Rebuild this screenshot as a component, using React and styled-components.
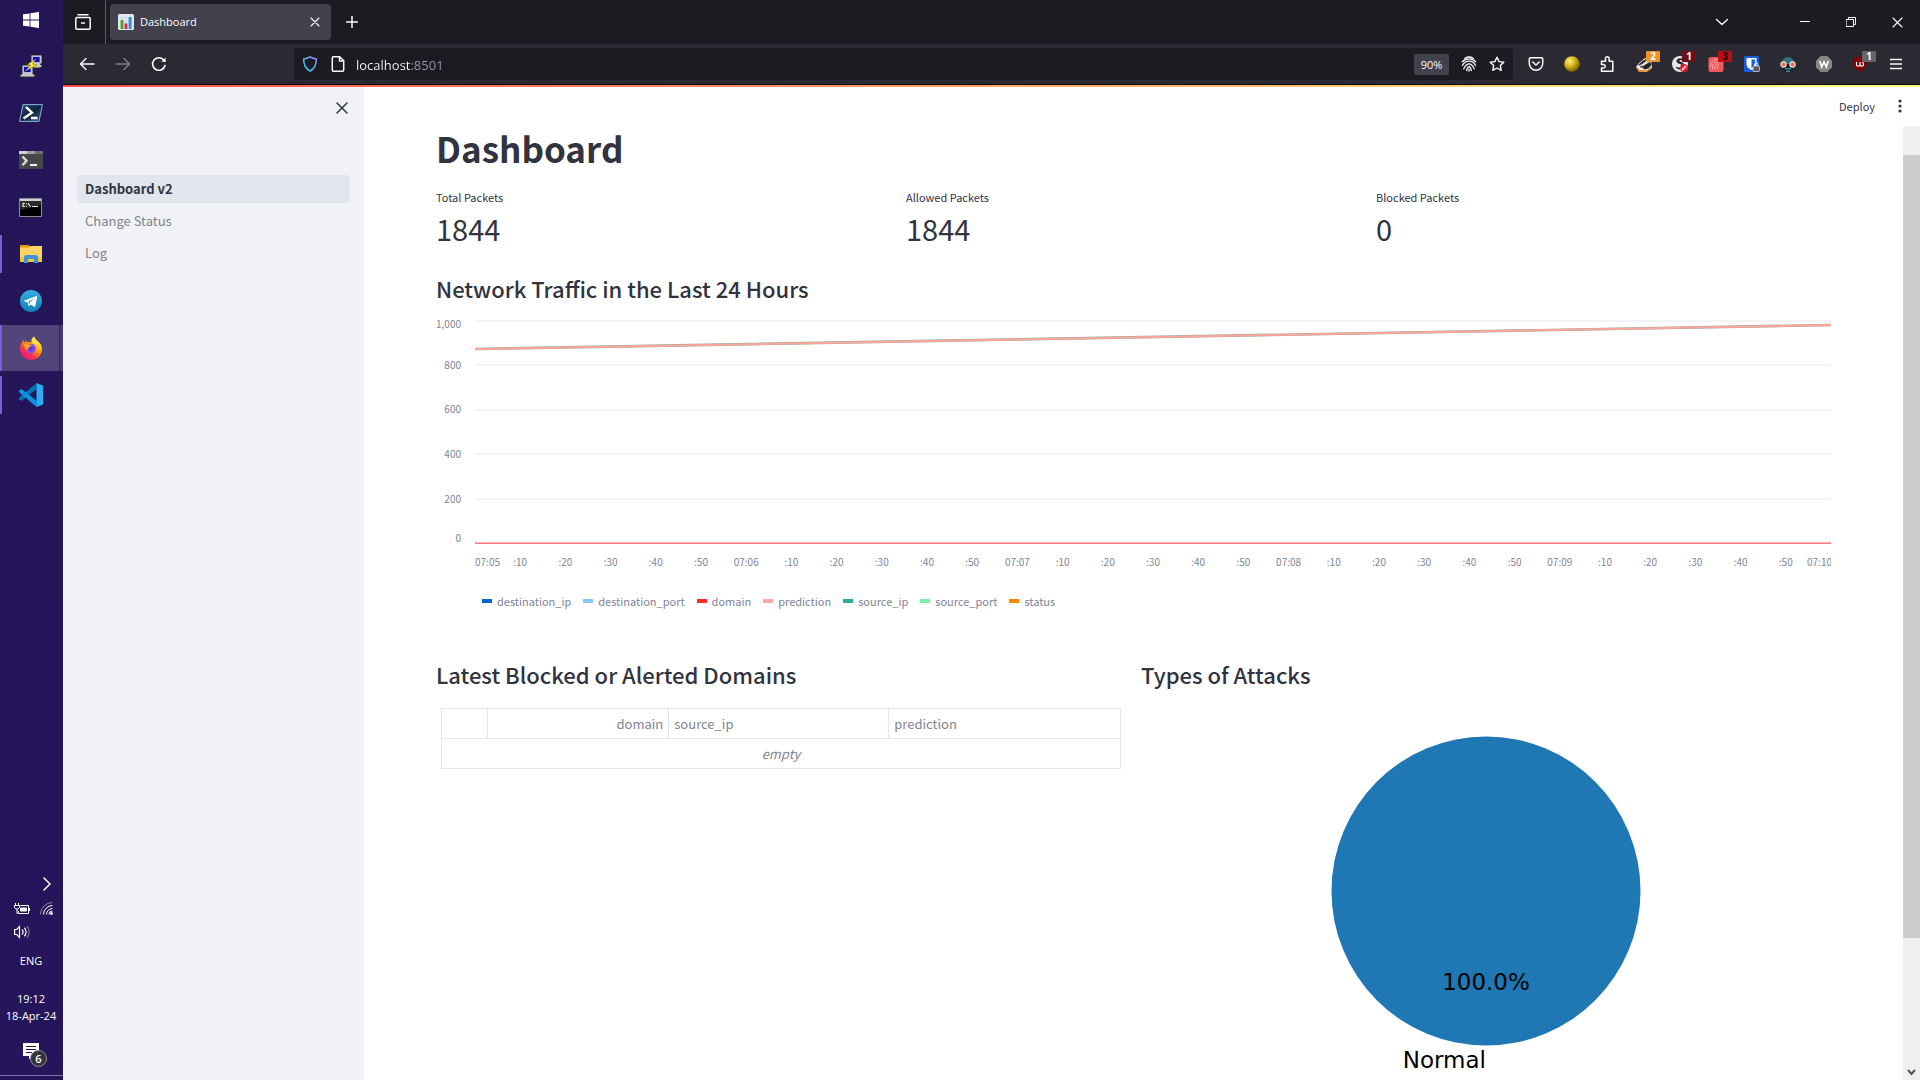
import React from 'react';
import styled, { createGlobalStyle, css } from 'styled-components';

const SANS = '"Noto Sans CJK SC", "Noto Sans", sans-serif';
const SYSTEM = '"Open Sans", "Noto Sans", sans-serif';

const GlobalStyle = createGlobalStyle`
  *, *::before, *::after { box-sizing: border-box; }
  body { margin: 0; background: #fff; font-family: ${SANS}; overflow: hidden; }
  button { border: 0; padding: 0; margin: 0; background: none; color: inherit; font: inherit; cursor: pointer; }
  svg { display: block; flex: none; }
`;

/* ---------- shell ---------- */

const Desktop = styled.div`
  display: flex;
  height: 100vh;
  overflow: hidden;
`;

const Taskbar = styled.nav`
  display: flex;
  flex-direction: column;
  width: 63px;
  flex: none;
  background: linear-gradient(#241557, #25165c);
  color: #fff;
  font-family: ${SYSTEM};
`;

const StartButton = styled.button`
  display: grid;
  place-items: center;
  height: 40px;
  margin-bottom: 3px;
  padding-right: 2px;
`;

const AppButton = styled.button`
  position: relative;
  display: grid;
  place-items: center;
  height: 46px;
  margin-bottom: 1px;
  padding-right: 2px;
  ${p => p.$active && css`
    background: linear-gradient(to right, #51457a 59px, #33275f 59px, #33275f 60px, #463a70 60px);
  `}
  ${p => p.$open && css`
    &::before {
      content: '';
      position: absolute;
      left: 0;
      top: ${p.$active ? 0 : 4}px;
      bottom: ${p.$active ? 0 : 4}px;
      width: 2px;
      background: #7561d1;
    }
  `}
`;

const Tray = styled.div`
  display: flex;
  flex-direction: column;
  margin-top: auto;
`;

const TrayToggle = styled.button`
  display: flex;
  justify-content: flex-end;
  padding: 0 10px 0 0;
  height: 25px;
`;

const TrayIcons = styled.div`
  display: grid;
  grid-template-columns: 16px 14px;
  gap: 10px;
  padding: 0 0 0 14px;
  align-items: center;
`;

const TrayText = styled.div`
  font-size: 11px;
  line-height: 17px;
  text-align: center;
  white-space: nowrap;
  padding-right: 1px;
  margin-top: ${p => p.$gap || 0}px;
`;

const Notifications = styled.button`
  position: relative;
  display: flex;
  margin-top: 19px;
  padding-left: 23px;
  height: 32px;
`;

const Count = styled.span`
  position: absolute;
  left: 30px;
  top: 7px;
  width: 17px;
  height: 17px;
  border: 1px solid #8f8f98;
  border-radius: 50%;
  background: #33323d;
  font-size: 11px;
  font-weight: 600;
  line-height: 15px;
  text-align: center;
`;

const ShowDesktop = styled.button`
  height: 5px;
  border-top: 1px solid #8279a6;
`;

/* ---------- browser ---------- */

const Browser = styled.div`
  flex: 1;
  min-width: 0;
  display: flex;
  flex-direction: column;
`;

const TabStrip = styled.div`
  display: flex;
  align-items: center;
  height: 44px;
  flex: none;
  background: #1c1b22;
  color: #fbfbfe;
  font-family: ${SYSTEM};
`;

const ViewButton = styled.button`
  display: grid;
  place-items: center;
  width: 43px;
  height: 44px;
  padding-right: 3px;
  border-right: 1px solid #5b5b66;
`;

const Tab = styled.div`
  display: flex;
  align-items: center;
  gap: 6px;
  width: 221px;
  height: 36px;
  margin-left: 4px;
  padding: 0 8px;
  border-radius: 4px;
  background: #42414d;
  line-height: 16px;
`;

const TabTitle = styled.span`
  flex: 1;
  font-size: 11px;
`;

const IconButton = styled.button`
  position: relative;
  display: grid;
  place-items: center;
  width: ${p => p.$w || 36}px;
  height: ${p => p.$h || 32}px;
  opacity: ${p => (p.disabled ? 0.4 : 1)};
`;

const TabListButton = styled(IconButton)`
  margin: 0 42px 0 auto;
`;

const WindowControls = styled.div`
  display: flex;
`;

const NavBar = styled.div`
  display: flex;
  align-items: center;
  height: 41px;
  flex: none;
  padding: 0 6px;
  background: #2b2a33;
  border-bottom: 1px solid #0c0c0d;
  color: #fbfbfe;
  font-family: ${SYSTEM};
`;

const UrlBar = styled.label`
  display: flex;
  align-items: center;
  flex: 1;
  height: 32px;
  margin: 0 5px 0 117px;
  padding: 0 2px;
  border-radius: 4px;
  background: #1c1b22;
`;

const UrlInput = styled.input.attrs({ type: 'text' })`
  flex: 1;
  min-width: 0;
  border: 0;
  padding: 1px 0 0 4px;
  outline: 0;
  font: 13px/20px ${SYSTEM};
  background: linear-gradient(to right, #fbfbfe 59px, #9a99a2 59px);
  background-clip: text;
  -webkit-background-clip: text;
  color: transparent;
`;

const ZoomLevel = styled.button`
  width: 35px;
  height: 21px;
  margin-right: 6px;
  border-radius: 2px;
  background: #42414d;
  font-size: 11px;
  line-height: 21px;
`;

const Badge = styled.span`
  position: absolute;
  right: 2px;
  top: 3px;
  width: 14px;
  height: 11px;
  border-radius: 1px;
  background: ${p => p.$bg};
  color: ${p => p.$color || '#fff'};
  font-size: 10px;
  font-weight: 700;
  line-height: 11px;
  text-align: center;
`;

/* ---------- web page ---------- */

const Decoration = styled.div`
  height: 2px;
  flex: none;
  background: linear-gradient(to right, #ff4b4b, #fffd80);
`;

const Page = styled.div`
  display: flex;
  flex: 1;
  min-height: 0;
  color: #31333f;
`;

const Sidebar = styled.aside`
  width: 301px;
  flex: none;
  padding: 10px 14px;
  background: #f0f2f6;
`;

const SidebarTop = styled.div`
  display: flex;
  justify-content: flex-end;
  height: 78px;
  align-items: flex-start;
`;

const SideNav = styled.nav`
  display: flex;
  flex-direction: column;
  gap: 4px;
`;

const SideLink = styled.a`
  display: block;
  height: 28px;
  padding: 0 8px;
  border-radius: 4px;
  font-size: 13px;
  line-height: 28px;
  text-decoration: none;
  color: ${p => (p.$active ? '#31333f' : '#81838c')};
  font-weight: ${p => (p.$active ? 700 : 400)};
  background: ${p => (p.$active ? '#e1e6ed' : 'transparent')};
`;

const View = styled.div`
  flex: 1;
  min-width: 0;
  display: flex;
  flex-direction: column;
`;

const Toolbar = styled.header`
  display: flex;
  justify-content: flex-end;
  align-items: center;
  gap: 7px;
  height: 39px;
  flex: none;
  padding: 0 10px 1px 0;
`;

const DeployButton = styled.button`
  font-size: 11px;
  line-height: 20px;
  padding: 0 8px;
`;

const Scroller = styled.div`
  display: flex;
  flex: 1;
  min-height: 0;
`;

const Content = styled.main`
  flex: 1;
  min-width: 0;
  padding: 0 72px;
`;

const ScrollTrack = styled.div`
  display: flex;
  flex-direction: column;
  justify-content: space-between;
  align-items: center;
  width: 17px;
  flex: none;
  padding: 29px 0 4px;
  background: #f0f0f0;
`;

const ScrollThumb = styled.div`
  width: 17px;
  height: 85%;
  background: #cdcdcd;
`;

const Title = styled.h1`
  margin: 0 0 17px;
  font-size: 35px;
  line-height: 44px;
  font-weight: 700;
`;

const Heading = styled.h3`
  margin: 0 0 2px;
  font-size: 22px;
  line-height: 32px;
  font-weight: 500;
`;

const Columns = styled.div`
  display: grid;
  grid-template-columns: repeat(${p => p.$count}, minmax(0, 1fr));
  gap: 15px;
  margin-bottom: ${p => p.$below || 0}px;
`;

const MetricLabel = styled.div`
  font-size: 11px;
  line-height: 20px;
`;

const MetricValue = styled.div`
  font-size: 29px;
  line-height: 42px;
`;

const Chart = styled.figure`
  display: flex;
  margin: 0;
  svg text {
    font-family: ${SANS};
    font-size: 10px;
    fill: #808495;
  }
`;

const YAxis = styled.svg`
  width: 39px;
  height: 275px;
`;

const Plot = styled.svg`
  flex: 1 1 0;
  min-width: 0;
  height: 275px;
  overflow: hidden;
`;

const Legend = styled.ul`
  display: flex;
  gap: 12px;
  list-style: none;
  margin: 10px 0 47px;
  padding: 0 0 0 46px;
`;

const LegendItem = styled.li`
  display: flex;
  align-items: center;
  gap: 5px;
  font-size: 11px;
  line-height: 20px;
  color: #808495;
  &::before {
    content: '';
    width: 10px;
    height: 4px;
    background: ${p => p.$color};
  }
`;

const TableWrap = styled.div`
  padding: 16px 5px 0;
`;

const Table = styled.table`
  width: 100%;
  table-layout: fixed;
  border-collapse: collapse;
  font-size: 13px;
  line-height: 20px;
  th, td {
    height: 30px;
    padding: 0 5px;
    border: 1px solid #e6e6ea;
    font-weight: 400;
    text-align: left;
    color: #83848c;
  }
`;

const Th = styled.th.attrs({ scope: 'col' })`
  && { text-align: ${p => p.$align || 'left'}; }
  width: ${p => p.$w};
`;

const Empty = styled.td`
  && { text-align: center; font-style: italic; }
`;

const Pie = styled.svg`
  width: 100%;
  height: 388px;
  text { font-family: "DejaVu Sans", sans-serif; font-size: 23px; fill: #000; }
`;

/* ---------- icons ---------- */

const Line = ({ size = 16, w = 1.4, children, ...rest }) => (
  <svg width={size} height={size} viewBox={`0 0 ${size} ${size}`} fill="none" stroke="currentColor"
    strokeWidth={w} strokeLinecap="round" strokeLinejoin="round" {...rest}>{children}</svg>
);

const WindowsIcon = () => (
  <svg width="16" height="16" viewBox="0 0 16 16" fill="#fff">
    <path d="M0 2.3 6.6 1.4V7.6H0zM7.4 1.3 16 0V7.6H7.4zM0 8.4H6.6V14.6L0 13.7zM7.4 8.4H16V16L7.4 14.7z" />
  </svg>
);

const PuttyIcon = () => (
  <svg width="24" height="24" viewBox="0 0 24 24">
    <path d="M12 1h11v9h-2l2 1v2l-3 1H12l-2-1 2-3z" fill="#c6c6c6" stroke="#222" strokeWidth=".8" />
    <path d="M13.500 2.500h7.500v6h-7.500z" fill="#0b0bd8" stroke="#eee" strokeWidth=".6" />
    <path d="M3 11h11v9l2 1v2H1v-2l2-1z" fill="#c6c6c6" stroke="#222" strokeWidth=".8" />
    <path d="M4.500 12.500h7.500v6H4.500z" fill="#0b0bd8" stroke="#eee" strokeWidth=".6" />
    <path d="M17.500 4.500 8 10.500l3.800.8L5 18l12.500-7-4-.9z" fill="#ffee1c" stroke="#4a4a00" strokeWidth=".4" />
  </svg>
);

const PowerShellIcon = () => (
  <svg width="24" height="18" viewBox="0 0 24 18">
    <defs>
      <linearGradient id="ps" x1="0" y1="0" x2="1" y2="1">
        <stop offset="0" stopColor="#2c5179" /><stop offset=".5" stopColor="#10223b" /><stop offset="1" stopColor="#3a618e" />
      </linearGradient>
    </defs>
    <path d="M4 .6h19.400L20 17.400H.6z" fill="url(#ps)" stroke="#8fb4dc" />
    <path d="m7 3 6 5.700L4.500 14.500M12 14h6.500" fill="none" stroke="#fff" strokeWidth="2.400" />
  </svg>
);

const TerminalIcon = () => (
  <svg width="24" height="18" viewBox="0 0 24 18">
    <path d="M0 0h24v18H0z" fill="#464646" />
    <path d="M0 0h8v3H0z" fill="#d0d0d0" /><path d="M8 0h8v3H8z" fill="#a0a0a0" /><path d="M16 0h8v3h-8z" fill="#6d6d6d" />
    <path d="m3.500 5.500 4 4.300-4 4.400" fill="none" stroke="#d9d9d9" strokeWidth="2.400" />
    <path d="M11 13h7v2h-7z" fill="#f0f0f0" />
  </svg>
);

const CmdIcon = () => (
  <svg width="24" height="19" viewBox="0 0 24 19">
    <path d="M.5.5h22v18H.5z" fill="#000" stroke="#8d8d8d" />
    <path d="M1 1h21v2H1z" fill="#c9d2da" />
    <path d="M1 3h21v4L1 12z" fill="#2a2a2a" />
    <path d="M5.800 5.400H4v3h1.800M7.500 5.500v1M7.500 8v.8M9 5l2.500 4M13 8.500h6" stroke="#e8e8e8" fill="none" strokeWidth="1.100" />
  </svg>
);

const ExplorerIcon = () => (
  <svg width="22" height="18" viewBox="0 0 22 18">
    <path d="M0 0h9l1 1.500V5H0z" fill="#e19d0b" />
    <path d="M0 2.600h9L10.500 1H22v16H0z" fill="#ffd464" />
    <path d="M0 12h22v5H0z" fill="#f8c63e" />
    <path d="M4 18v-6.500l1.500-1.500h11l1.500 1.500V18h-4v-4H8v4z" fill="#3a96dd" />
  </svg>
);

const TelegramIcon = () => (
  <svg width="22" height="22" viewBox="0 0 24 24">
    <defs><linearGradient id="tg" x1="0" y1="0" x2="0" y2="1"><stop stopColor="#37aee2" /><stop offset="1" stopColor="#1180b8" /></linearGradient></defs>
    <circle cx="12" cy="12" r="12" fill="url(#tg)" />
    <path d="M4.500 11.800 17.800 6.600c.6-.2 1.200.2 1 1.100l-2.200 10c-.2.800-.7.900-1.300.6l-3.500-2.600-1.700 1.700c-.4.300-.7.200-.8-.3l-1.100-3.700-3.700-1.100c-.6-.2-.6-.4 0-.5z" fill="#fff" />
    <path d="m9.200 12.800 6.600-4.100-5.200 5-.3 2.600z" fill="#1c8ec6" />
  </svg>
);

const FirefoxIcon = () => (
  <svg width="24" height="24" viewBox="0 0 24 24">
    <defs>
      <linearGradient id="ffa" x1=".85" y1=".1" x2=".2" y2=".95">
        <stop offset="0" stopColor="#fff44f" /><stop offset=".4" stopColor="#ff980e" /><stop offset=".7" stopColor="#ff3647" /><stop offset="1" stopColor="#e31587" />
      </linearGradient>
      <radialGradient id="ffb"><stop offset="0" stopColor="#592acb" /><stop offset="1" stopColor="#9059ff" /></radialGradient>
    </defs>
    <path d="M15 .5c1.200 1.700 1.400 2.800 3.600 4.500 3 2.300 4.400 4.800 4.400 8A11 11 0 0 1 1 13C1 9.500 2 7.500 3.300 5.600L4 4l1.500 2.200 2-1.700.5 1.800c1.700-.6 3.200-.3 4.400.4C11.500 4 13 2 15 .5z" fill="url(#ffa)" />
    <circle cx="12" cy="12.500" r="4.800" fill="url(#ffb)" />
    <path d="M4 8.500c2-1.500 4.500-1.200 5.500 0 1.200.5 2.600.2 3.500.6-.7 1.800-2.500 1.400-3.200 2.400-.7 1-.5 2.400-2.500 2.600-1.400-1.300-1-3-3.300-5.600z" fill="#ffa21a" />
    <path d="M15 1c.5 3.500 5 5.500 5.700 11-1-2.500-3-4.200-7.200-5C12.800 5 13.500 2.500 15 1z" fill="#fff04a" opacity=".8" />
  </svg>
);

const VSCodeIcon = () => (
  <svg width="24" height="24" viewBox="0 0 24 24">
    <path d="M17.500 0v6.200L2.500 18 0 16.500v-1.700z" fill="#0572b3" />
    <path d="M0 9V7.500L2.500 6l15 11.800V24z" fill="#0795e0" />
    <path d="M17.500 0 24 2.600v18.800L17.500 24z" fill="#29adf3" />
  </svg>
);

const Cross = ({ size = 10 }) => <Line size={size} w={1.1}><path d={`M1 1 ${size - 1} ${size - 1}M${size - 1} 1 1 ${size - 1}`} /></Line>;

const BatteryIcon = () => (
  <svg width="16" height="12" viewBox="0 0 16 12" fill="none" stroke="#fff">
    <path d="M6.500 2.500h8v8h-10V8M15.500 5v3M1.500 0v2M4.500 0v2M.5 2.500h5v2L4 6H2L.5 4.500zM3 6v5" />
    <path d="M6.500 5H12.500v3H6.500z" fill="#fff" />
  </svg>
);

const WifiIcon = () => (
  <svg width="13" height="13" viewBox="0 0 13 13" fill="none" stroke="#fff">
    <path d="M.5 12.500a12 12 0 0 1 12-12" opacity=".45" /><path d="M3.500 12.500a9 9 0 0 1 9-9M6.500 12.500a6 6 0 0 1 6-6M9 12.500a3.500 3.500 0 0 1 3.500-3.500" />
    <circle cx="11.500" cy="11.500" r="1" fill="#fff" />
  </svg>
);

const VolumeIcon = () => (
  <svg width="16" height="14" viewBox="0 0 16 14" fill="none" stroke="#fff" strokeWidth="1.200">
    <path d="M.6 4.500h2.200L5.500 1.600v10.800L2.800 9.500H.6z" /><path d="M8 4.500a3.500 3.500 0 0 1 0 5M10.300 2.700a6 6 0 0 1 0 8.600" /><path d="M12.800 1a9 9 0 0 1 0 12" opacity=".4" />
  </svg>
);

const NoteIcon = () => (
  <svg width="16" height="17" viewBox="0 0 16 17"><path d="M0 0h16v13H9.500L6 16.500V13H0z" fill="#fff" /><path d="M3 3.500h10M3 6.500h10M3 9.500h6" stroke="#25165c" /></svg>
);

const ViewIcon = () => (
  <Line w={1.500}><path d="M3 .8h10M1.800 3.600h12.400a1 1 0 0 1 1 1v9.600a1 1 0 0 1-1 1H1.800a1 1 0 0 1-1-1V4.600a1 1 0 0 1 1-1zM6.500 9h3" /></Line>
);

const ChartIcon = () => (
  <svg width="16" height="16" viewBox="0 0 16 16">
    <rect width="16" height="16" rx="1.500" fill="#e3ecf2" />
    <path d="M0 4h16M0 8h16M0 12h16M4 0v16M8 0v16M12 0v16" stroke="#bccad4" strokeWidth=".5" />
    <path d="M2.500 6h3v9h-3z" fill="#5c9e31" /><path d="M6.600 9.500h2.800V15H6.600z" fill="#dc2a45" /><path d="M10.600 3h3v12h-3z" fill="#3b8fd6" />
  </svg>
);

const Star = () => <Line><path d="m8 1.200 2.100 4.400 4.700.6-3.500 3.300.9 4.800L8 12l-4.200 2.300.9-4.800L1.200 6.200l4.700-.6z" /></Line>;

const FingerprintIcon = () => (
  <Line w={1.300}>
    <path d="M3.800 2.300A8 8 0 0 1 12.200 2.300M1.300 5.800c3.200-3.800 10.200-3.800 13.400 0M1.500 9.500C2.700 6.500 5.200 5.200 8 5.200s5.300 1.300 6.500 4.300M2.800 12.800C4.300 9.500 5.300 7.800 8 7.800s3.900 1.900 5.200 5M5.600 14.500c.8-1.800 1-4 2.400-4s1.700 2.200 2.400 4M8 13.200v2" />
  </Line>
);

const PocketIcon = () => <Line w={1.500}><path d="M2.500 1.800h11a1.200 1.200 0 0 1 1.200 1.200v4.500a6.700 6.700 0 0 1-13.400 0V3a1.200 1.200 0 0 1 1.200-1.200zM4.800 6 8 9l3.200-3" /></Line>;

const BallIcon = () => (
  <svg width="16" height="16" viewBox="0 0 16 16">
    <defs><radialGradient id="ball" cx=".35" cy=".3" r=".75"><stop stopColor="#fff27a" /><stop offset=".45" stopColor="#d9b91a" /><stop offset="1" stopColor="#6d5600" /></radialGradient></defs>
    <circle cx="8" cy="8" r="7.800" fill="url(#ball)" />
  </svg>
);

const PuzzleIcon = () => <Line w={1.500}><path d="M1.500 5.200h4V2.600a1.800 1.800 0 0 1 3.600 0v2.600h3.700v10H1.500v-3.300h2a1.700 1.700 0 0 0 0-3.400h-2z" /></Line>;

const BadgerIcon = () => (
  <svg width="16" height="16" viewBox="0 0 16 16">
    <path d="M0 11 3 7l6-5 6 4 1 5-6 4.500H3z" fill="#f1ebe4" />
    <path d="m1.500 9.500 5-4.500L11 2.500 9 6 4.500 9zM6 11.500 10 8l4-2 1.500 3-3 3.500-4 1zM4 10.500l4-1.500-3 3z" fill="#252327" />
    <path d="m0 11 1.500.5L4 14l8 .5 4-3.500v1.500l-5 3.500H3z" fill="#ef8d32" />
  </svg>
);

const NoScriptIcon = () => (
  <svg width="16" height="16" viewBox="0 0 16 16">
    <circle cx="8" cy="8" r="8" fill="#e8e8ea" /><path d="M11 3C7 1 3 4 5 6.500c1.500 1.800 5 1 4.500 3.500-.5 2-4 2-6 .5 1 4 8 4 9-.5.7-4-6-4-5-5.500.6-.8 2-.2 3.500.5z" fill="#25242b" />
    <circle cx="12" cy="12" r="4" fill="#e5202e" /><path d="m10 14 4-4" stroke="#fff" strokeWidth="1.500" />
  </svg>
);

const RedPrintIcon = () => (
  <svg width="16" height="16" viewBox="0 0 16 16">
    <rect x=".5" y="1" width="15" height="15" rx="2" fill="#f05a59" />
    <path d="M2.500 11c0-5 3-8 7-7.500M4.500 13c-.5-5 2.500-7.500 6-7M6.500 13.500c0-3.500 2-5.500 4.500-5.500M9 13c0-1.500 1-2.500 2-2.500" fill="none" stroke="#f9b0ae" />
  </svg>
);

const BitwardenIcon = () => (
  <svg width="18" height="16" viewBox="0 0 18 16">
    <rect x="1" width="15" height="16" rx="1" fill="#175ddc" /><path d="M3.500 2h10v6c0 3-2.500 4.700-5 6-2.500-1.300-5-3-5-6z" fill="#fff" /><path d="M8.500 3.500H12V8c0 2-1.500 3.200-3.500 4.300z" fill="#175ddc" />
    <rect x="10" y="10" width="6.500" height="5.500" rx="1" fill="#59595e" stroke="#fff" strokeWidth=".6" /><path d="M11.500 10V8.700a1.700 1.700 0 0 1 3.400 0V10" stroke="#e8e8e8" fill="none" />
  </svg>
);

const SpyIcon = () => (
  <svg width="16" height="16" viewBox="0 0 16 16">
    <path d="M2 7a6 6 0 0 1 12 0v1H2z" fill="#2d7480" /><path d="M3 8h10v7H3z" fill="#171d25" /><path d="M5 12h6v1.500H5zM6 14.500h4V16H6z" fill="#2e8b95" />
    <circle cx="3.500" cy="8.500" r="2.600" fill="#e96a4f" stroke="#f9ddd2" strokeWidth="1.200" /><circle cx="12.500" cy="8.500" r="2.600" fill="#e96a4f" stroke="#f9ddd2" strokeWidth="1.200" />
  </svg>
);

const WIcon = () => (
  <svg width="16" height="16" viewBox="0 0 16 16"><path d="M4.700 0h6.600L16 4.700v6.600L11.300 16H4.700L0 11.300V4.700z" fill="#868686" /><path d="m3.800 5 1.900 6L8 6l2.300 5 1.900-6" stroke="#fff" strokeWidth="1.600" fill="none" /></svg>
);

const UblockIcon = () => (
  <svg width="16" height="16" viewBox="0 0 16 16"><path d="M8 0c2 1.500 4 2 7 2 0 7-.5 10-7 14C1.500 12 1 9 1 2c3 0 5-.5 7-2z" fill="#800000" /><path d="M4.500 6v2.500a1.700 1.700 0 0 0 3.500 0V6m0 2.500a1.800 1.800 0 1 0 1.800-2" stroke="#fff" strokeWidth="1.200" fill="none" /></svg>
);

/* ---------- data ---------- */

const apps = [
  { name: 'PuTTY', Icon: PuttyIcon },
  { name: 'PowerShell', Icon: PowerShellIcon },
  { name: 'Terminal', Icon: TerminalIcon },
  { name: 'Command Prompt', Icon: CmdIcon },
  { name: 'File Explorer', Icon: ExplorerIcon, open: true },
  { name: 'Telegram', Icon: TelegramIcon },
  { name: 'Firefox', Icon: FirefoxIcon, open: true, active: true },
  { name: 'Visual Studio Code', Icon: VSCodeIcon, open: true },
];

const extensions = [
  { name: 'Pocket', Icon: PocketIcon },
  { name: 'Theme', Icon: BallIcon },
  { name: 'Extensions', Icon: PuzzleIcon },
  { name: 'Privacy Badger', Icon: BadgerIcon, count: 2, bg: '#ec9329' },
  { name: 'NoScript', Icon: NoScriptIcon, count: 1, bg: '#6b0f18' },
  { name: 'Canvas Blocker', Icon: RedPrintIcon, count: 3, bg: '#b90e16', color: '#1c0305' },
  { name: 'Bitwarden', Icon: BitwardenIcon },
  { name: 'User Agent', Icon: SpyIcon },
  { name: 'Web Archive', Icon: WIcon },
  { name: 'uBlock Origin', Icon: UblockIcon, count: 1, bg: '#66666a' },
];

const metrics = [
  ['Total Packets', '1844'],
  ['Allowed Packets', '1844'],
  ['Blocked Packets', '0'],
];

const series = [
  ['destination_ip', '#0068c9'],
  ['destination_port', '#83c9ff'],
  ['domain', '#ff2b2b'],
  ['prediction', '#ffabab'],
  ['source_ip', '#29b09d'],
  ['source_port', '#7defa1'],
  ['status', '#ff8700'],
];

const gridLines = [
  { label: '1,000', y: 14, text: 22 },
  { label: '800', y: 58, text: 63 },
  { label: '600', y: 103, text: 107 },
  { label: '400', y: 147, text: 152 },
  { label: '200', y: 192, text: 197 },
  { label: '0', y: 236, text: 236 },
];

const ticks = Array.from({ length: 31 }, (_, i) => ({
  x: `${(i / 30) * 100}%`,
  label: i % 6 === 0 ? `07:${String(5 + i / 6).padStart(2, '0')}` : `:${(i % 6) * 10}`,
  anchor: i === 0 ? 'start' : 'middle',
}));

/* ---------- app ---------- */

function TrafficChart() {
  return (
    <Chart>
      <YAxis aria-hidden="true">
        {gridLines.map(g => <text key={g.label} x="25" y={g.text} textAnchor="end">{g.label}</text>)}
      </YAxis>
      <Plot role="img" aria-label="Network traffic line chart">
        {gridLines.map(g => <line key={g.y} x1="0" x2="100%" y1={g.y + 1} y2={g.y + 1} stroke="#f3f4f8" strokeWidth="2" />)}
        <line x1="0" x2="100%" y1="236.500" y2="236.500" stroke="#ffb4b4" />
        <line x1="0" x2="100%" y1="237.500" y2="237.500" stroke="#f27d83" />
        <line x1="0" x2="100%" y1="43" y2="19" stroke="#8fb09d" strokeWidth="2.600" />
        <line x1="0" x2="100%" y1="43" y2="19" stroke="#ffa49a" strokeWidth="2" />
        {ticks.map((t, i) => (
          i === 30
            ? <svg key={i} x="100%" overflow="visible"><text x="-24" y="260">{t.label}</text></svg>
            : <text key={i} x={t.x} y="260" textAnchor={t.anchor}>{t.label}</text>
        ))}
      </Plot>
    </Chart>
  );
}

export default function App() {
  return (
    <Desktop>
      <GlobalStyle />
      <Taskbar aria-label="Taskbar">
        <StartButton aria-label="Start"><WindowsIcon /></StartButton>
        {apps.map(({ name, Icon, open, active }) => (
          <AppButton key={name} aria-label={name} $open={open} $active={active}><Icon /></AppButton>
        ))}
        <Tray>
          <TrayToggle aria-label="Show hidden icons">
            <Line size={14} w={1.500}><path d="m5 1 6 6-6 6" /></Line>
          </TrayToggle>
          <TrayIcons><BatteryIcon /><WifiIcon /><VolumeIcon /></TrayIcons>
          <TrayText $gap={13}>ENG</TrayText>
          <TrayText $gap={21}>19:12</TrayText>
          <TrayText>18-Apr-24</TrayText>
          <Notifications aria-label="Notifications"><NoteIcon /><Count>6</Count></Notifications>
          <ShowDesktop aria-label="Show desktop" />
        </Tray>
      </Taskbar>

      <Browser>
        <TabStrip>
          <ViewButton aria-label="Firefox View"><ViewIcon /></ViewButton>
          <Tab>
            <ChartIcon />
            <TabTitle>Dashboard</TabTitle>
            <IconButton $w={16} $h={16} aria-label="Close tab"><Cross /></IconButton>
          </Tab>
          <IconButton $w={42} aria-label="New tab"><Line size={12} w={1.500}><path d="M6 .5v11M.5 6h11" /></Line></IconButton>
          <TabListButton aria-label="List all tabs"><Line size={14}><path d="m1.500 4.500 5.500 5 5.500-5" /></Line></TabListButton>
          <WindowControls>
            <IconButton $w={46} aria-label="Minimize"><Line size={10} w={1}><path d="M0 4.500h10" /></Line></IconButton>
            <IconButton $w={46} aria-label="Restore"><Line size={10} w={1} strokeLinejoin="miter"><path d="M.5 2.500h7v7h-7zM2.500 2.500v-2h7v7h-2" /></Line></IconButton>
            <IconButton $w={46} aria-label="Close"><Cross size={11} /></IconButton>
          </WindowControls>
        </TabStrip>

        <NavBar>
          <IconButton aria-label="Back"><Line><path d="M15 8H1.500M7 2.500 1.500 8 7 13.500" /></Line></IconButton>
          <IconButton aria-label="Forward" disabled><Line><path d="M1 8h13.500M9 2.500 14.500 8 9 13.500" /></Line></IconButton>
          <IconButton aria-label="Reload"><Line w={1.600}><path d="M14 9.500A6.300 6.300 0 1 1 12.500 3.700L14 5.200" /><path d="M14.500 1.500v4.200h-4.200z" fill="currentColor" stroke="none" /></Line></IconButton>
          <UrlBar>
            <IconButton $w={28} aria-label="Tracking protection">
              <svg width="16" height="16" viewBox="0 0 16 16" fill="none" strokeWidth="1.500">
                <defs><linearGradient id="sh" x1="1" y1="0" x2="0" y2="1"><stop stopColor="#a78bff" /><stop offset=".6" stopColor="#3ec0f0" /><stop offset="1" stopColor="#3ae0e8" /></linearGradient></defs>
                <path d="M8 .8c2 1.300 4 1.900 6.300 2.100.2 6-1.300 9.500-6.300 12.200C3 12.400 1.500 8.900 1.700 2.900 4 2.700 6 2.100 8 .8z" stroke="url(#sh)" />
              </svg>
            </IconButton>
            <IconButton $w={28} aria-label="Site information"><Line w={1.500}><path d="M3.500.8h6.200l4 4v9.200a1.200 1.200 0 0 1-1.200 1.200h-9A1.200 1.200 0 0 1 2.300 14V2A1.200 1.200 0 0 1 3.500.8zM9.500 1v4h4" /></Line></IconButton>
            <UrlInput aria-label="Address" defaultValue="localhost:8501" />
            <ZoomLevel>90%</ZoomLevel>
            <IconButton $w={28} aria-label="Fingerprint"><FingerprintIcon /></IconButton>
            <IconButton $w={28} aria-label="Bookmark"><Star /></IconButton>
          </UrlBar>
          {extensions.map(({ name, Icon, count, bg, color }) => (
            <IconButton key={name} aria-label={name}>
              <Icon />
              {count && <Badge $bg={bg} $color={color}>{count}</Badge>}
            </IconButton>
          ))}
          <IconButton aria-label="Menu"><Line size={12} w={1.500}><path d="M0 1.500h12M0 6h12M0 10.500h12" /></Line></IconButton>
        </NavBar>

        <Decoration />
        <Page>
          <Sidebar>
            <SidebarTop>
              <IconButton $w={16} $h={22} aria-label="Close sidebar"><Line size={12} w={1.500}><path d="m1 1 10 10M11 1 1 11" /></Line></IconButton>
            </SidebarTop>
            <SideNav>
              <SideLink href="#dashboard" $active>Dashboard v2</SideLink>
              <SideLink href="#status">Change Status</SideLink>
              <SideLink href="#log">Log</SideLink>
            </SideNav>
          </Sidebar>

          <View>
            <Toolbar>
              <DeployButton>Deploy</DeployButton>
              <IconButton $w={20} aria-label="Main menu">
                <svg width="4" height="14" viewBox="0 0 4 14" fill="#31333f"><circle cx="2" cy="2" r="1.600" /><circle cx="2" cy="7" r="1.600" /><circle cx="2" cy="12" r="1.600" /></svg>
              </IconButton>
            </Toolbar>
            <Scroller>
              <Content>
                <Title>Dashboard</Title>
                <Columns $count={3} $below={23}>
                  {metrics.map(([label, value]) => (
                    <div key={label}>
                      <MetricLabel>{label}</MetricLabel>
                      <MetricValue>{value}</MetricValue>
                    </div>
                  ))}
                </Columns>
                <Heading>Network Traffic in the Last 24 Hours</Heading>
                <TrafficChart />
                <Legend>
                  {series.map(([name, color]) => <LegendItem key={name} $color={color}>{name}</LegendItem>)}
                </Legend>
                <Columns $count={2}>
                  <section>
                    <Heading>Latest Blocked or Alerted Domains</Heading>
                    <TableWrap>
                      <Table>
                        <thead>
                          <tr>
                            <Th $w="46px" aria-label="index" />
                            <Th $w="26.7%" $align="right">domain</Th>
                            <Th $w="32.4%">source_ip</Th>
                            <Th>prediction</Th>
                          </tr>
                        </thead>
                        <tbody>
                          <tr><Empty colSpan={4}>empty</Empty></tr>
                        </tbody>
                      </Table>
                    </TableWrap>
                  </section>
                  <section>
                    <Heading>Types of Attacks</Heading>
                    <Pie role="img" aria-label="Pie chart of attack types">
                      <circle cx="50%" cy="199" r="154.500" fill="#1f77b4" />
                      <text x="50%" y="298" textAnchor="middle">100.0%</text>
                      <text x="50%" y="376" textAnchor="end">Normal</text>
                    </Pie>
                  </section>
                </Columns>
              </Content>
              <ScrollTrack aria-hidden="true">
                <ScrollThumb />
                <svg width="9" height="7" viewBox="0 0 9 7"><path d="m1 1 3.500 4L8 1" fill="none" stroke="#505050" strokeWidth="2" /></svg>
              </ScrollTrack>
            </Scroller>
          </View>
        </Page>
      </Browser>
    </Desktop>
  );
}
